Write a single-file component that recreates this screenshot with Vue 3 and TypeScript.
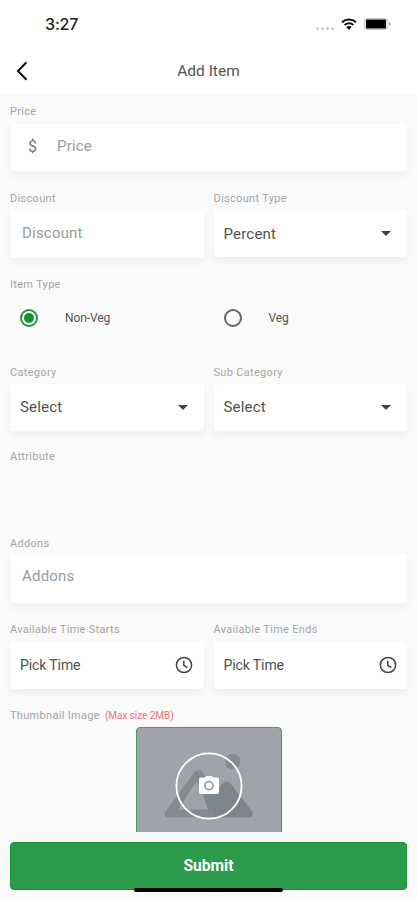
<script setup lang="ts">
import { ref } from 'vue'

type ItemType = 'Non-Veg' | 'Veg'

const itemTypes: ItemType[] = ['Non-Veg', 'Veg']
const itemType = ref<ItemType>('Non-Veg')
const categories: string[] = ['Category', 'Sub Category']
const times: string[] = ['Available Time Starts', 'Available Time Ends']
</script>

<template>
  <main class="screen">
    <header class="top">
      <div class="status">
        <span class="clock">3:27</span>
        <div class="indicators">
          <span class="dots"><i v-for="n in 4" :key="n"></i></span>
          <svg class="wifi" viewBox="0 0 16 12">
            <path d="M1 4.2a10.3 10.3 0 0 1 14 0M3.5 7a6.7 6.7 0 0 1 9 0" fill="none" stroke="#111" stroke-width="1.9" />
            <path d="M5.4 9.1a4 4 0 0 1 5.2 0L8 11.9z" fill="#111" />
          </svg>
          <svg class="battery" viewBox="0 0 27 12">
            <rect x=".5" y=".5" width="23" height="11" rx="1.5" fill="#eee" stroke="#d2d2d2" />
            <rect x="2" y="1.6" width="20" height="8.8" rx=".5" fill="#000" />
            <path d="M25 4v4q1.5-.7 1.5-2T25 4z" fill="#999" />
          </svg>
        </div>
      </div>
      <nav class="bar">
        <svg class="back" viewBox="0 0 12 20"><path d="M10.5 1.3 2 10l8.5 8.7" fill="none" stroke="#151515" stroke-width="2.1" /></svg>
        <h1>Add Item</h1>
      </nav>
    </header>

    <form class="form" @submit.prevent>
      <section class="row price">
        <div class="field">
          <label>Price</label>
          <div class="box input"><span class="dollar">$</span><span>Price</span></div>
        </div>
      </section>

      <section class="row discount">
        <div class="field">
          <label>Discount</label>
          <div class="box input">Discount</div>
        </div>
        <div class="field">
          <label>Discount Type</label>
          <div class="box select percent"><span>Percent</span><i class="caret"></i></div>
        </div>
      </section>

      <section class="types">
        <label>Item Type</label>
        <div class="options">
          <div v-for="type in itemTypes" :key="type" class="option" @click="itemType = type">
            <span class="radio" :class="{ on: itemType === type }"></span>
            <span>{{ type }}</span>
          </div>
        </div>
      </section>

      <section class="row category">
        <div v-for="name in categories" :key="name" class="field">
          <label>{{ name }}</label>
          <div class="box select"><span>Select</span><i class="caret"></i></div>
        </div>
      </section>

      <section class="attribute"><label>Attribute</label></section>

      <section class="row addons">
        <div class="field">
          <label>Addons</label>
          <div class="box input">Addons</div>
        </div>
      </section>

      <section class="row times">
        <div v-for="name in times" :key="name" class="field">
          <label>{{ name }}</label>
          <div class="box time">
            <span>Pick Time</span>
            <svg viewBox="0 0 18 18"><circle cx="9" cy="9" r="7.6" /><path d="M8.8 4.8v4.5l3.5 2.2" /></svg>
          </div>
        </div>
      </section>

      <section class="thumb">
        <label>Thumbnail Image <em>(Max size 2MB)</em></label>
        <div class="picture">
          <svg viewBox="0 0 144 104">
            <circle cx="95.7" cy="33.7" r="7.7" fill="#858990" />
            <path d="M29 83 57.5 44q4-4 8 0L78 63v26.5H32q-6 0-3-6.5z" fill="#858990" />
            <path d="M41 81.5 59 54q5 4 8 15l5 12.5z" fill="#a0a3aa" />
            <path d="m67 69 6-5 5 1 8-10q3.500-3 7 0l22 28q2.500 6.500-4 6.500H76V81.500h-5z" fill="#7e848b" />
            <circle cx="72" cy="58" r="32.6" fill="none" stroke="#fff" stroke-width="1.8" />
            <path d="M64 49.500h4l1-1.500h6l1 1.500h4q2 0 2 2V64q0 2-2 2H64q-2 0-2-2V51.500q0-2 2-2z" fill="#fff" />
            <circle cx="72" cy="57.600" r="4.1" fill="#fff" stroke="#8e9299" stroke-width="1.6" />
          </svg>
        </div>
      </section>
    </form>

    <footer class="foot">
      <button type="button">Submit</button>
      <span class="home"></span>
    </footer>
  </main>
</template>

<style>
body {
  margin: 0;
}
</style>

<style scoped>
.screen {
  width: 417px;
  height: 900px;
  box-sizing: border-box;
  display: flex;
  flex-direction: column;
  overflow: hidden;
  background: #fafafa;
  color: #555;
  font-family: Roboto, sans-serif;
}
.top {
  height: 95px;
  flex: none;
  background: #fff;
  box-shadow: 0 0 3px rgba(0, 0, 0, 0.02);
}
.status {
  height: 48px;
  padding: 0 26px 0 45px;
  display: flex;
  align-items: center;
  justify-content: space-between;
}
.clock {
  font: 500 16px/20px Inter, sans-serif;
  letter-spacing: -0.15px;
  color: #222;
}
.indicators {
  display: flex;
  align-items: center;
}
.dots {
  display: flex;
  gap: 2px;
  margin: 8px 7px 0 0;
}
.dots i {
  width: 3px;
  height: 3px;
  border-radius: 50%;
  background: #ccc;
}
.wifi {
  width: 16px;
  height: 12px;
  margin-right: 7px;
}
.battery {
  width: 27px;
  height: 12px;
}
.bar {
  height: 46px;
  padding: 0 16px;
  display: grid;
  grid-template-columns: 12px 1fr 12px;
  align-items: center;
}
.back {
  width: 12px;
  height: 20px;
}
h1 {
  margin: 0;
  text-align: center;
  font-size: 15.5px;
  line-height: 20px;
  font-weight: 400;
}
.form {
  flex: none;
  height: 729px;
  padding: 8px 10px 0;
  overflow: hidden;
}
label {
  display: block;
  height: 16px;
  line-height: 18px;
  font-size: 11px;
  color: #a5a5a5;
  white-space: nowrap;
  letter-spacing: 0.31px;
}
.row {
  display: flex;
  gap: 10px;
}
.field {
  flex: 1;
  display: flex;
  flex-direction: column;
  gap: 4px;
}
.box {
  height: 48px;
  box-sizing: border-box;
  padding: 0 10px;
  display: flex;
  align-items: center;
  justify-content: space-between;
  background: #fff;
  border-radius: 4px;
  box-shadow: 0 4px 8px rgba(0, 0, 0, 0.05);
  font-size: 15px;
  letter-spacing: 0.2px;
}
.input {
  justify-content: flex-start;
  padding: 0 12px;
  color: #9b9b9b;
  padding-bottom: 3px;
}
.price {
  height: 87px;
}
.price .field {
  gap: 5px;
}
.price .box {
  height: 47px;
  padding-left: 18px;
}
.dollar {
  width: 29px;
  font-size: 16px;
  line-height: 20px;
  padding-top: 2px;
  color: #777;
}
.discount {
  height: 86px;
}
.percent {
  height: 47px;
}
.select,
.time {
  color: #505050;
}
.caret {
  margin-right: 6px;
  border: 5px solid transparent;
  border-top-color: #444;
  border-bottom: 0;
}
.types {
  height: 88px;
}
.options {
  display: grid;
  grid-template-columns: 1fr 1fr;
  gap: 10px;
  padding-top: 16px;
}
.option {
  height: 20px;
  padding-left: 10px;
  display: flex;
  align-items: center;
  gap: 27px;
  font-size: 12px;
}
.radio {
  width: 18px;
  height: 18px;
  box-sizing: border-box;
  border: 2px solid #666;
  border-radius: 50%;
  display: grid;
  place-items: center;
}
.option > span:last-child {
  letter-spacing: -0.1px;
}
.radio.on {
  border-color: #229641;
}
.radio.on::after {
  content: '';
  width: 10px;
  height: 10px;
  border-radius: 50%;
  background: #15902f;
}
.category {
  height: 84px;
}
.category .field {
  gap: 3.5px;
}
.category .box {
  height: 47px;
}
.attribute {
  height: 87px;
}
.addons {
  height: 86px;
}
.addons .field {
  gap: 3px;
}
.addons .box {
  height: 49px;
  padding-bottom: 5px;
}
.times {
  height: 86px;
}
.time {
  font-size: 14px;
  letter-spacing: -0.1px;
}
.time svg {
  width: 18px;
  height: 18px;
  margin-right: 0.5px;
  fill: none;
  stroke: #444;
  stroke-width: 1.5;
}
em {
  color: #ef7079;
  font-style: normal;
  font-size: 10px;
  letter-spacing: -0.05px;
  margin-left: 2px;
}
.picture {
  width: 146px;
  height: 120px;
  box-sizing: border-box;
  margin: 4px auto 0;
  border: 1px solid #4c9862;
  border-radius: 4px;
  background: #a0a3aa;
}
.picture svg {
  display: block;
  width: 144px;
  height: 104px;
}
.foot {
  padding: 18px 10px 0;
  margin-top: -8px;
  display: flex;
  flex-direction: column;
  align-items: center;
}
button {
  width: 100%;
  height: 48px;
  padding: 0;
  border: 1px solid #159037;
  border-radius: 4px;
  background: #2b9a4b;
  color: #fff;
  font: 700 15.6px Roboto, sans-serif;
}
.home {
  width: 149px;
  height: 4px;
  margin-top: -2px;
  border-radius: 2px;
  background: #000;
  z-index: 1;
}
</style>
